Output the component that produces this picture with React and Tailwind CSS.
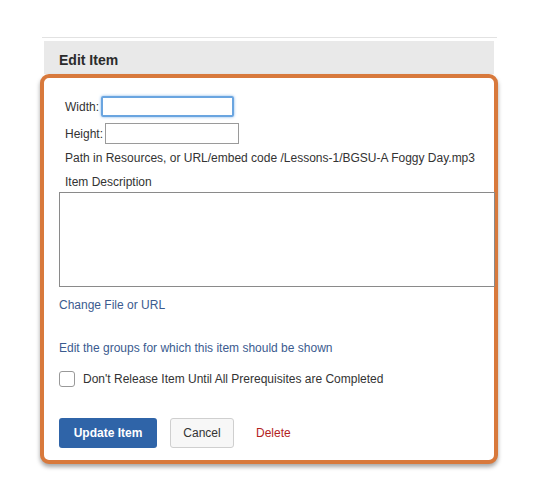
import React from 'react';

const App = () => {
  return (
    <div className="w-[540px] h-[504px] bg-white overflow-hidden font-['Liberation_Sans',Arial,sans-serif] text-[12px] text-[#333]">
      <div className="ml-[40px] w-[458px] pt-[37px]">
        {/* top rule */}
        <div className="ml-[2px] mr-[1px] h-px bg-[#e2e2e2]" />

        {/* header */}
        <div className="mt-[3px] mx-[4px] h-[33px] bg-[#e9e9e9] pl-[15px] flex items-center">
          <h2 className="text-[14px] font-bold text-[#2b2b2b] mt-[5px]">Edit Item</h2>
        </div>

        {/* orange frame */}
        <div className="border-[4px] border-[#d8793c] rounded-[9px] bg-white shadow-[0_3px_4px_rgba(0,0,0,0.35)] pl-[15px] pt-[18px] pb-[12px]">
          <div className="flex items-center pl-[6px] h-[21px]">
            <span>Width:</span>
            <input
              type="text"
              className="ml-[2px] w-[133px] h-[21px] border-2 border-[#6aa5e0] rounded-[2px] shadow-[0_0_3px_#7fb2e8] outline-none"
            />
          </div>
          <div className="flex items-center pl-[6px] h-[21px] mt-[6px]">
            <span>Height:</span>
            <input
              type="text"
              className="ml-[2px] w-[134px] h-[21px] border border-[#9a9a9a] outline-none"
            />
          </div>
          <p className="pl-[6px] mt-[6px] leading-[17px]">
            Path in Resources, or URL/embed code /Lessons-1/BGSU-A Foggy Day.mp3
          </p>
          <p className="pl-[6px] mt-[7px] leading-[17px]">Item Description</p>
          <textarea className="block mt-[1px] w-[436px] h-[95px] border border-[#8a8a8a] resize-none outline-none" />

          <a className="block mt-[10px] leading-[17px] text-[#3b5b8f] cursor-pointer">Change File or URL</a>
          <a className="block mt-[26px] leading-[17px] text-[#3b5b8f] cursor-pointer">
            Edit the groups for which this item should be shown
          </a>

          <label className="flex items-center mt-[13px] h-[17px]">
            <span className="w-[16px] h-[16px] border border-[#999] rounded-[3px] bg-white" />
            <span className="ml-[8px]">Don't Release Item Until All Prerequisites are Completed</span>
          </label>

          <div className="flex items-center mt-[31px]">
            <button className="w-[98px] h-[30px] rounded-[3px] bg-[#2f64a8] text-white font-bold text-[12px]">
              Update Item
            </button>
            <button className="ml-[13px] w-[64px] h-[30px] rounded-[3px] border border-[#cfcfcf] bg-[#f7f7f7] text-[#333] text-[12px]">
              Cancel
            </button>
            <button className="ml-[22px] text-[#b3241e] text-[12px]">Delete</button>
          </div>
        </div>
      </div>
    </div>
  );
};

export default App;
